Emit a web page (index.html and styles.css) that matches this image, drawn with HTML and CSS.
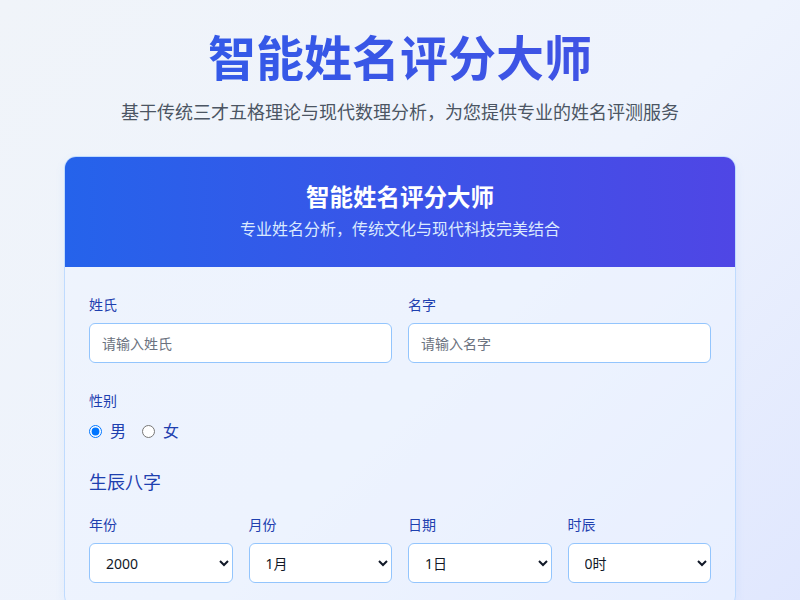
FILE: index.html
```html
<!DOCTYPE html>
<html lang="zh-CN">
<head>
  <meta charset="UTF-8" />
  <meta name="viewport" content="width=device-width, initial-scale=1.0"/>
  <title>智能姓名评分大师</title>
  <link rel="stylesheet" href="styles.css">
</head>
<body>

<div class="page">
  <h1 class="hero-title">智能姓名评分大师</h1>
  <p class="hero-sub">基于传统三才五格理论与现代数理分析，为您提供专业的姓名评测服务</p>

  <div class="card">
    <div class="card-head">
      <h2>智能姓名评分大师</h2>
      <p>专业姓名分析，传统文化与现代科技完美结合</p>
    </div>

    <div class="card-body">
      <div class="row two">
        <div class="field">
          <label for="surname">姓氏</label>
          <input type="text" id="surname" placeholder="请输入姓氏" />
        </div>
        <div class="field">
          <label for="given">名字</label>
          <input type="text" id="given" placeholder="请输入名字" />
        </div>
      </div>

      <div class="field gender">
        <label>性别</label>
        <div class="radios">
          <label class="radio"><input type="radio" name="gender" checked /> 男</label>
          <label class="radio"><input type="radio" name="gender" /> 女</label>
        </div>
      </div>

      <h3 class="section-title">生辰八字</h3>
      <div class="row four">
        <div class="field">
          <label for="year">年份</label>
          <select id="year"></select>
        </div>
        <div class="field">
          <label for="month">月份</label>
          <select id="month"></select>
        </div>
        <div class="field">
          <label for="day">日期</label>
          <select id="day"></select>
        </div>
        <div class="field">
          <label for="hour">时辰</label>
          <select id="hour"></select>
        </div>
      </div>
    </div>
  </div>
</div>

<script>
  function fill(id, from, to, suffix) {
    const sel = document.getElementById(id);
    for (let i = from; i <= to; i++) {
      const opt = document.createElement('option');
      opt.textContent = i + suffix;
      sel.appendChild(opt);
    }
  }
  fill('year', 2000, 2030, '');
  fill('month', 1, 12, '月');
  fill('day', 1, 31, '日');
  fill('hour', 0, 23, '时');
</script>
</body>
</html>
```

FILE: styles.css
```css
* { box-sizing: border-box; }

body {
  margin: 0;
  min-height: 600px;
  font-family: "Noto Sans", "Noto Sans CJK SC", sans-serif;
  background: linear-gradient(135deg, #f0f4f9 0%, #eef3fd 55%, #e0e7fe 100%);
}

.page {
  max-width: 672px;
  margin: 0 auto;
  padding-top: 26px;
}

.hero-title {
  margin: 0;
  text-align: center;
  font-size: 48px;
  line-height: 64px;
  font-weight: 700;
  background: linear-gradient(90deg, #2f5ce9, #4450e3);
  -webkit-background-clip: text;
  background-clip: text;
  color: transparent;
  white-space: nowrap;
}

.hero-sub {
  margin: 8px -60px 0;
  text-align: center;
  font-size: 18px;
  line-height: 28px;
  color: #4b5563;
}

.card {
  margin-top: 30px;
  border: 1px solid #bfdbfe;
  border-radius: 12px;
  background: rgba(236, 243, 255, 0.6);
  box-shadow: 0 4px 12px rgba(59, 130, 246, 0.06);
  overflow: hidden;
}

.card-head {
  height: 110px;
  padding-top: 24px;
  text-align: center;
  color: #fff;
  background: linear-gradient(90deg, #2563eb, #4f46e5);
}

.card-head h2 {
  margin: 0;
  font-size: 23.5px;
  line-height: 32px;
  font-weight: 700;
}

.card-head p {
  margin: 4px 0 0;
  font-size: 16px;
  line-height: 24px;
  color: #dbeafe;
}

.card-body {
  padding: 28px 24px 24px;
}

.row {
  display: grid;
  gap: 16px;
}

.row.two { grid-template-columns: 1fr 1fr; }
.row.four { grid-template-columns: repeat(4, 1fr); }

.field label {
  display: block;
  margin-bottom: 8px;
  font-size: 14px;
  line-height: 20px;
  color: #1e40af;
}

.field input[type="text"],
.field select {
  width: 100%;
  height: 40px;
  padding: 0 12px;
  border: 1px solid #93c5fd;
  border-radius: 6px;
  background: #fff;
  font-family: inherit;
  font-size: 14px;
  color: #111827;
}

.field input::placeholder { color: #6b7280; }

.gender { margin-top: 28px; }

.radios {
  display: flex;
  gap: 16px;
  height: 24px;
  align-items: center;
}

.field .radio {
  display: flex;
  align-items: center;
  gap: 8px;
  margin: 0;
  font-size: 16px;
  color: #1e40af;
}

.radio input { margin: 0; width: 13px; height: 13px; }

.section-title {
  margin: 25px 0 19px;
  font-size: 18px;
  line-height: 28px;
  font-weight: 400;
  color: #1e40af;
}
```
